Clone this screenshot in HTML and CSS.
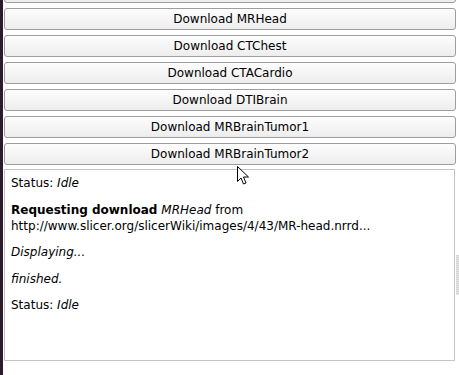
FILE: index.html
```html
<!DOCTYPE html>
<html lang="en">
<head>
  <meta charset="UTF-8">
  <title>Sample Data</title>
  <link rel="stylesheet" href="styles.css">
</head>
<body>
  <div class="edge"></div>

  <div class="panel">
    <div class="buttons">
      <button class="button first"></button>
      <button class="button">Download MRHead</button>
      <button class="button">Download CTChest</button>
      <button class="button">Download CTACardio</button>
      <button class="button">Download DTIBrain</button>
      <button class="button">Download MRBrainTumor1</button>
      <button class="button">Download MRBrainTumor2</button>
    </div>

    <div class="log">
      <p>Status: <i>Idle</i></p>
      <p><b>Requesting download</b> <i>MRHead</i> from<br>http://www.slicer.org/slicerWiki/images/4/43/MR-head.nrrd...</p>
      <p><i>Displaying...</i></p>
      <p><i>finished.</i></p>
      <p>Status: <i>Idle</i></p>
    </div>
  </div>

  <div class="scroll-thumb"></div>

  <svg class="cursor" width="13" height="20" viewBox="0 0 13 20">
    <path d="M0.5 0.5 L0.5 15.5 L4 12 L6.5 18 L9 17 L6.5 11 L11.5 11 Z" fill="#fff" stroke="#000" stroke-width="1" stroke-linejoin="miter"/>
  </svg>
</body>
</html>
```

FILE: styles.css
```css
body {
  margin: 0;
  width: 459px;
  height: 375px;
  overflow: hidden;
  display: flex;
  background-color: #FFFFFF;
  font-family: "DejaVu Sans", Verdana, sans-serif;
  font-size: 12px;
  color: #000000;
  position: relative;
}

.edge {
  width: 3px;
  flex-shrink: 0;
  background-color: #2C1B2A;
}

.panel {
  flex: 1;
  padding: 0 3px 0 1px;
}

.buttons {
  display: flex;
  flex-direction: column;
  gap: 5px;
}

.button {
  height: 22px;
  margin: 0;
  padding: 0;
  border: 1px solid #9E9E9E;
  border-radius: 3px;
  background: linear-gradient(#FDFDFD, #EDEDED);
  font-family: inherit;
  font-size: 12px;
  color: #000000;
  text-align: center;
}

.button.first {
  margin-top: -19px;
}

.log {
  margin-top: 4px;
  margin-right: 1px;
  height: 192px;
  box-sizing: border-box;
  border: 1px solid #C4C4C4;
  padding: 5px 6px;
  line-height: 16px;
}

.log p {
  margin: 0 0 10.5px;
}

.scroll-thumb {
  position: absolute;
  right: 0;
  top: 255px;
  width: 3px;
  height: 40px;
  background: repeating-linear-gradient(#D4D4D4 0 1px, #E4E4E4 1px 2px);
}

.cursor {
  position: absolute;
  left: 237px;
  top: 166px;
}
```
